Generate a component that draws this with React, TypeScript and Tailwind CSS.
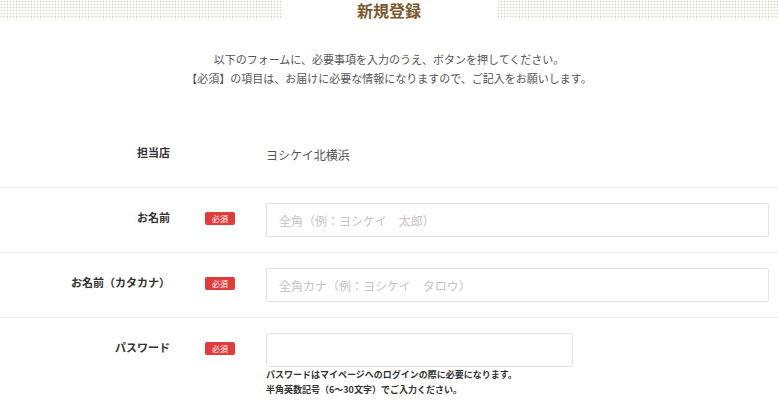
import type { FC } from 'react';

interface RowProps {
  label: string;
  required?: boolean;
  children: React.ReactNode;
  last?: boolean;
}

const Badge: FC = () => (
  <span className="flex h-[13px] w-[30px] items-center justify-center rounded-[2px] bg-[#e03c3c] text-[8px] leading-none text-white">
    必須
  </span>
);

const Row: FC<RowProps> = ({ label, required, children, last }) => (
  <div className={`flex items-start pt-[15px] pb-[15px] ${last ? '' : 'border-b border-[#ececec]'}`}>
    <div className="w-[170px] shrink-0 pt-[6px] text-right text-[11px] font-bold leading-[16px] text-[#333]">
      {label}
    </div>
    <div className="flex w-[96px] shrink-0 pl-[35px] pt-[9px]">{required && <Badge />}</div>
    <div className="flex-1 pr-[9px]">{children}</div>
  </div>
);

const Dots: FC = () => (
  <div className="h-[19px] flex-1 bg-[radial-gradient(circle,#dcd5c9_0.8px,transparent_1.1px)] bg-[length:3px_3px]" />
);

const inputCls =
  'h-[34px] w-full rounded-[2px] border border-[#e3e3e3] bg-white px-[12px] text-[12px] text-[#333] placeholder:text-[#c4c4c4] outline-none';

export default function App() {
  return (
    <div className="min-h-[416px] w-[778px] bg-white font-['Noto_Sans_CJK_JP','Noto_Sans',sans-serif]">
      {/* Heading */}
      <div className="flex items-start">
        <Dots />
        <h1 className="w-[215px] pt-[1px] text-center text-[16px] font-bold leading-[19px] text-[#7a5a2c]">新規登録</h1>
        <Dots />
      </div>

      {/* Intro */}
      <div className="mt-[30px] text-center text-[11px] leading-[19px] text-[#555]">
        <p>以下のフォームに、必要事項を入力のうえ、ボタンを押してください。</p>
        <p>【必須】の項目は、お届けに必要な情報になりますので、ご記入をお願いします。</p>
      </div>

      {/* Form */}
      <div className="mt-[35px]">
        <Row label="担当店">
          <div className="flex h-[34px] items-center text-[12px] text-[#555]">ヨシケイ北横浜</div>
        </Row>
        <Row label="お名前" required>
          <input className={inputCls} placeholder="全角（例：ヨシケイ　太郎）" />
        </Row>
        <Row label="お名前（カタカナ）" required>
          <input className={inputCls} placeholder="全角カナ（例：ヨシケイ　タロウ）" />
        </Row>
        <Row label="パスワード" required last>
          <input type="password" className={`${inputCls} !w-[307px]`} />
          <p className="text-[9px] font-bold leading-[15px] text-[#333]">
            パスワードはマイページへのログインの際に必要になります。
          </p>
          <p className="text-[9px] font-bold leading-[15px] text-[#333]">半角英数記号（6～30文字）でご入力ください。</p>
        </Row>
      </div>
    </div>
  );
}
